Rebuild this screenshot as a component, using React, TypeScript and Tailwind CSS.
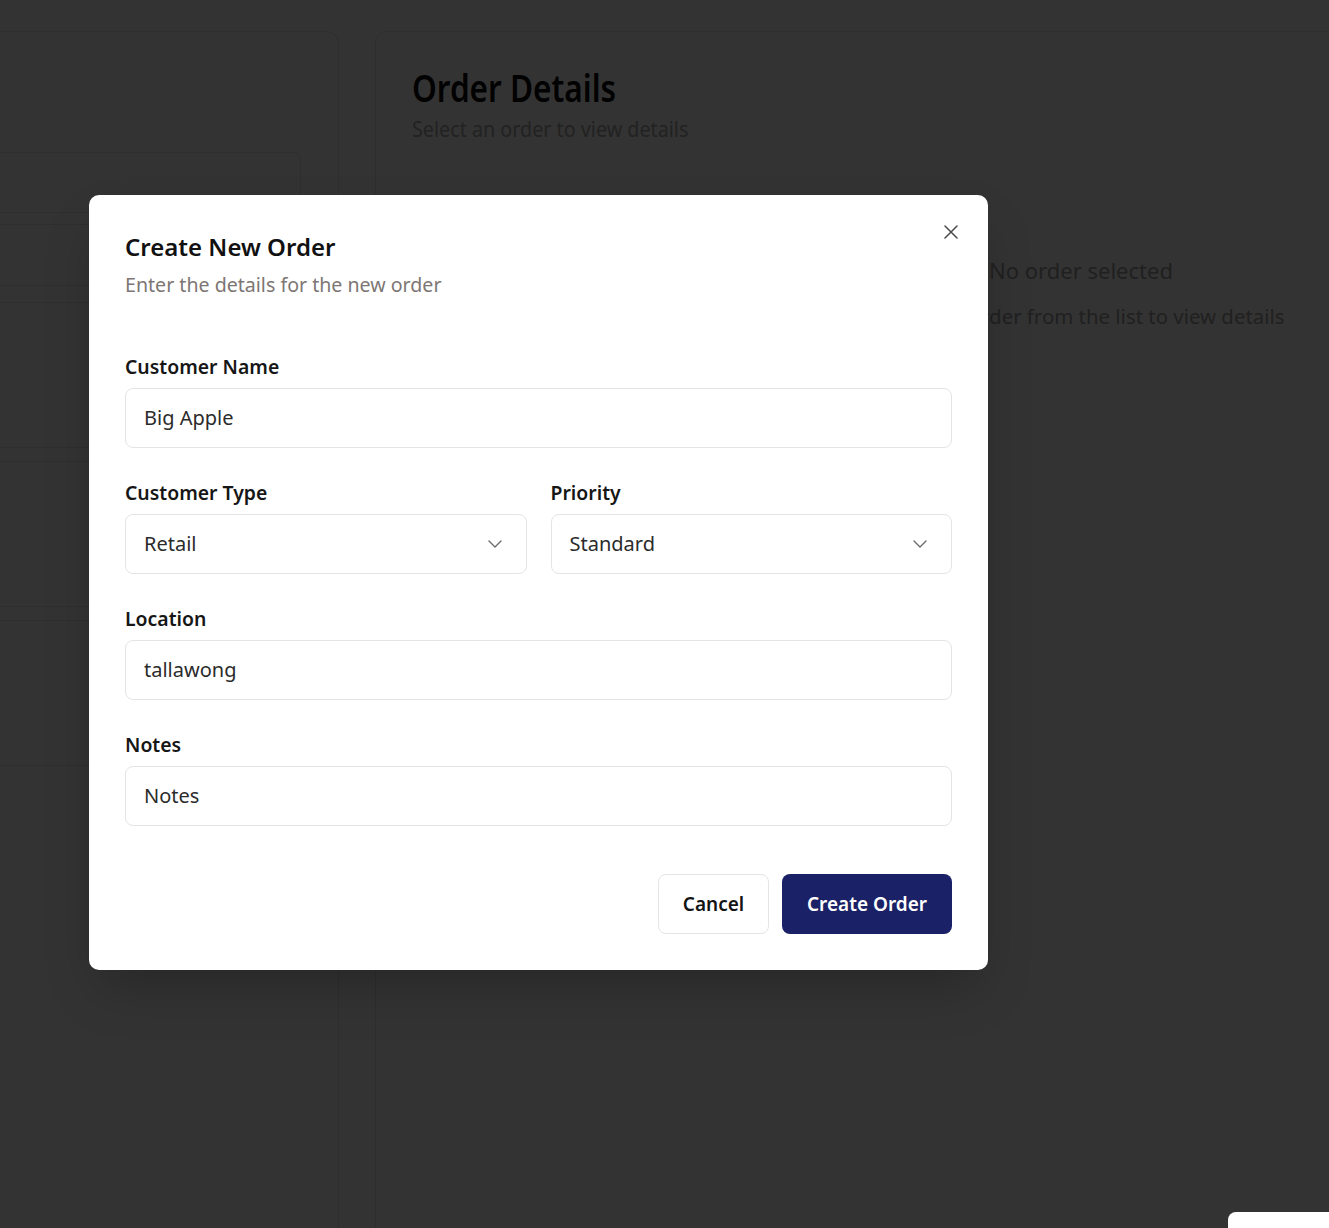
import React from "react";

const font = { fontFamily: '"Noto Sans", "Open Sans", Arial, sans-serif' };

function Field({ label, value }: { label: string; value: string }) {
  return (
    <div className="flex flex-col gap-[9px]">
      <label className="text-[19.4px] leading-[24px] font-semibold text-[#161616]">{label}</label>
      <div className="flex h-[60px] items-center rounded-[8px] border border-[#e4e4e4] bg-white px-[18px] text-[20px] text-[#2b2b2b]">
        {value}
      </div>
    </div>
  );
}

function SelectField({ label, value }: { label: string; value: string }) {
  return (
    <div className="flex flex-col gap-[9px]">
      <label className="text-[19.4px] leading-[24px] font-semibold text-[#161616]">{label}</label>
      <div className="flex h-[60px] items-center justify-between rounded-[8px] border border-[#e4e4e4] bg-white pl-[18px] pr-[24px] text-[20px] text-[#2b2b2b]">
        <span>{value}</span>
        <svg width="14" height="8" viewBox="0 0 14 8" fill="none">
          <polyline points="1,1 7,7 13,1" stroke="#6b6b6b" strokeWidth="1.4" strokeLinecap="round" strokeLinejoin="round" />
        </svg>
      </div>
    </div>
  );
}

export default function App() {
  return (
    <div className="relative h-[1228px] w-[1329px] overflow-hidden bg-white" style={font}>
      {/* underlying page */}
      <div className="flex gap-[36px] pt-[31px]">
        <div className="-ml-[41px] flex h-[1300px] w-[380px] shrink-0 flex-col rounded-[12px] border border-[#e5e5e5] pr-[37px] pt-[120px]">
          <div className="h-[61px] rounded-r-[8px] border border-[#e5e5e5]" />
          <div className="mt-[11px] h-[62px] border border-[#e5e5e5]" />
          <div className="mt-[16px] flex flex-col gap-[13px]">
            <div className="h-[146px] border border-[#e5e5e5]" />
            <div className="h-[146px] border border-[#e5e5e5]" />
            <div className="h-[146px] border border-[#e5e5e5]" />
          </div>
        </div>
        <div className="flex h-[1300px] w-[1412px] shrink-0 flex-col rounded-[12px] border border-[#e5e5e5] px-[36px] pt-[33px]">
          <h1 className="origin-left scale-x-[0.83] whitespace-nowrap text-[38px] leading-[44px] font-semibold text-[#0a0a0a]">Order Details</h1>
          <p className="mt-[6px] origin-left scale-x-[0.94] whitespace-nowrap text-[21px] leading-[28px] text-[#a8a8a8]">Select an order to view details</p>
          <div className="mt-[112px] flex flex-col items-center">
            <p className="text-[22px] leading-[30px] text-[#a0a0a0]">No order selected</p>
            <p className="mt-[17px] text-[20.4px] leading-[28px] text-[#a0a0a0]">Select an order from the list to view details</p>
          </div>
        </div>
      </div>

      {/* overlay */}
      <div className="absolute inset-0 bg-black/80" />

      {/* bottom-right floating element */}
      <div className="absolute left-[1228px] top-[1212px] h-[40px] w-[140px] rounded-tl-[8px] bg-white" />

      {/* modal */}
      <div className="absolute left-[89px] top-[195px] w-[899px] rounded-[10px] bg-white p-[36px] shadow-2xl">
        <button className="absolute right-[29px] top-[29px] flex h-[16px] w-[16px] items-center justify-center">
          <svg width="14" height="14" viewBox="0 0 14 14" fill="none">
            <path d="M1 1L13 13M13 1L1 13" stroke="#4a4a4a" strokeWidth="1.5" strokeLinecap="round" />
          </svg>
        </button>
        <h2 className="text-[24px] leading-[32px] font-semibold text-[#111111]">Create New Order</h2>
        <p className="mt-[10px] text-[19.6px] leading-[24px] text-[#7d7673]">Enter the details for the new order</p>

        <div className="mt-[58px] flex flex-col gap-[33px]">
          <Field label="Customer Name" value="Big Apple" />
          <div className="grid grid-cols-2 gap-[24px]">
            <SelectField label="Customer Type" value="Retail" />
            <SelectField label="Priority" value="Standard" />
          </div>
          <Field label="Location" value="tallawong" />
          <Field label="Notes" value="Notes" />
        </div>

        <div className="mt-[48px] flex justify-end gap-[13px]">
          <button className="h-[60px] w-[111px] rounded-[8px] border border-[#e4e4e4] bg-white text-[19px] font-semibold text-[#141414]">
            Cancel
          </button>
          <button className="h-[60px] w-[170px] rounded-[8px] bg-[#1b2166] text-[19px] font-semibold text-white">
            Create Order
          </button>
        </div>
      </div>
    </div>
  );
}
